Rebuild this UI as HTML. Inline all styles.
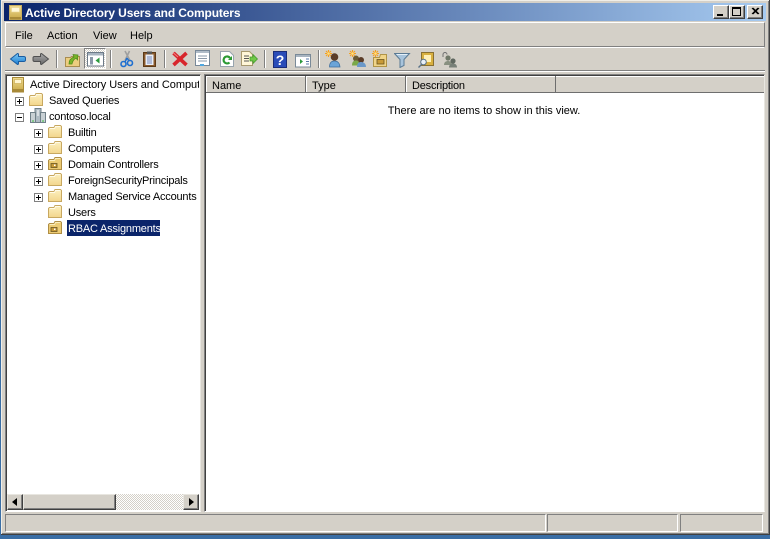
<!DOCTYPE html>
<html><head><meta charset="utf-8"><style>
html,body{margin:0;padding:0}
body{width:770px;height:539px;overflow:hidden;position:relative;background:#3a6ea5;font:11px "Liberation Sans",sans-serif;color:#000}
div,span,svg{position:absolute;box-sizing:border-box}
.t{white-space:nowrap;line-height:14px;height:14px}
.tr{letter-spacing:-.2px}
.btn{background:#d4d0c8;border:1px solid;border-color:#fff #404040 #404040 #fff;box-shadow:inset -1px -1px 0 #808080}
.sep{width:2px;height:18px;top:50px;border-left:1px solid #808080;border-right:1px solid #fff}
.hd{top:76px;height:17px;background:#d4d0c8;border-right:1px solid #6e6e6e;border-bottom:1px solid #6e6e6e;box-shadow:inset 1px 1px 0 #fff}
.st{top:514px;height:18px;border:1px solid;border-color:#808080 #fff #fff #808080}
.pm{width:9px;height:9px;border:1px solid #808080;background:#fff}
.pm:before{content:"";position:absolute;left:1px;top:3px;width:5px;height:1px;background:#000}
.pm.p:after{content:"";position:absolute;left:3px;top:1px;width:1px;height:5px;background:#000}
</style></head><body>
<svg width="0" height="0" style="position:absolute"><defs>
<linearGradient id="fg" x1="0" y1="0" x2="0" y2="1"><stop offset="0" stop-color="#fdf0c0"/><stop offset="1" stop-color="#f2d68c"/></linearGradient>
<linearGradient id="gold" x1="0" y1="0" x2="0" y2="1"><stop offset="0" stop-color="#f0dc90"/><stop offset="1" stop-color="#c8a848"/></linearGradient>
<linearGradient id="bl" x1="0" y1="0" x2="0" y2="1"><stop offset="0" stop-color="#7cc8f4"/><stop offset="1" stop-color="#1c7cd0"/></linearGradient>
<linearGradient id="gy" x1="0" y1="0" x2="0" y2="1"><stop offset="0" stop-color="#a8a8a8"/><stop offset="1" stop-color="#686868"/></linearGradient>
<g id="folder"><path d="M1.500 13.500V4.500l1-1h4.500l1-2h5.500l1 1v11z" fill="url(#fg)" stroke="#c8a860"/><path d="M2.500 4.500h5l1-2h5" fill="none" stroke="#fffbe8"/></g>
<g id="ofolder"><path d="M1.500 13.500V4.500l1-1h4.500l1-2h5.500l1 1v11z" fill="#eccb74" stroke="#b08e44"/><path d="M2.500 4.500h5l1-2h5" fill="none" stroke="#fbeebc"/><rect x="4" y="7.500" width="6" height="4" fill="#c89a38" stroke="#6a5420" stroke-width=".8"/><rect x="7" y="8.500" width="1.500" height="1.500" fill="#fff"/></g>
<g id="star"><path d="M0 3.500h7M3.500 0v7M1 1l5 5M6 1L1 6" stroke="#f4a020" stroke-width="1.100"/><circle cx="3.500" cy="3.500" r="1.300" fill="#ffe080"/></g>
</defs></svg>

<!-- window -->
<div style="left:1px;top:0;width:769px;height:535px;background:#d4d0c8;border-right:1px solid #404040;border-bottom:1px solid #404040;box-shadow:inset 1px 1px 0 #f0eee8,inset -1px -1px 0 #808080"></div>
<div style="left:4px;top:3px;width:762px;height:18px;background:linear-gradient(90deg,#0a246a,#a6caf0)"></div>
<svg style="left:9px;top:5px" width="13" height="15"><rect x=".5" y=".5" width="12" height="14" fill="url(#gold)" stroke="#c8ae60"/><rect x="2.500" y="2.500" width="8" height="4.500" fill="#fff8d8" stroke="#e8d490" stroke-width=".6"/><rect x="1" y="12" width="11" height="2.500" fill="#a88a38"/></svg>
<div class="t" style="left:25px;top:6px;color:#fff;font-weight:bold;font-size:12px;letter-spacing:-.13px">Active Directory Users and Computers</div>
<div class="btn" style="left:713px;top:5px;width:16px;height:14px"></div><div style="left:717px;top:14px;width:6px;height:2px;background:#000"></div>
<div class="btn" style="left:729px;top:5px;width:16px;height:14px"></div><div style="left:732px;top:7px;width:9px;height:9px;border:1px solid #000;border-top-width:2px"></div>
<div class="btn" style="left:747px;top:5px;width:16px;height:14px"></div>
<svg style="left:751px;top:7px" width="9" height="9"><path d="M1 1l6 6M2 1l6 6M7 1L1 7M8 1L2 7" stroke="#000" stroke-width="1"/></svg>

<!-- menu -->
<div style="left:5px;top:22px;width:760px;height:25px;border-top:1px solid #fff;border-left:1px solid #fff;border-right:1px solid #808080;border-bottom:1px solid #808080"></div>
<div style="left:6px;top:47px;width:758px;height:1px;background:#fff"></div>
<div class="t" style="left:15px;top:29px">File</div>
<div class="t" style="left:47px;top:29px">Action</div>
<div class="t" style="left:93px;top:29px">View</div>
<div class="t" style="left:130px;top:29px">Help</div>

<!-- toolbar -->
<div style="left:5px;top:70px;width:760px;height:1px;background:#808080"></div>
<div style="left:5px;top:71px;width:760px;height:1px;background:#fff"></div>
<svg style="left:9px;top:52px" width="42" height="15">
<path d="M1.500 7L8.500 1.500q1 0 1 1v2h5q2 0 2 1.500v2q0 1.500-2 1.500h-5v2q0 1-1 1z" fill="url(#bl)" stroke="#1a5ca0"/>
<path d="M39.500 7L32.500 1.500q-1 0-1 1v2h-6q-1.500 0-1.500 1.500v2q0 1.500 1.500 1.500h6v2q0 1 1 1z" fill="url(#gy)" stroke="#505050"/></svg>
<div class="sep" style="left:56px"></div>
<svg style="left:64px;top:52px" width="17" height="15"><path d="M1.500 14.500V5.500h5l1-1h8v10z" fill="#eccd80" stroke="#a88c50"/><path d="M5 12c0-4 2-6 5-7l-1-2.500 5 .5-.5 5-1.500-1.800c-2 1-3.500 3-4 5.800z" fill="#78b428" stroke="#4c8a18" stroke-width=".7"/></svg>
<div style="left:84px;top:48px;width:22px;height:21px;background:repeating-conic-gradient(#d4d0c8 0 25%,#fff 0 50%) 0 0/2px 2px;border:1px solid;border-color:#808080 #fff #fff #808080"></div>
<svg style="left:87px;top:52px" width="17" height="15"><rect x=".5" y=".5" width="16" height="13.500" fill="#fff" stroke="#6c7a88"/><rect x="1" y="1" width="15" height="2.500" fill="#a8b4c0"/><rect x="3" y="5" width="3" height="7.500" fill="#8a98a8"/><path d="M12.500 5.500l-4 3 4 3z" fill="#2c9a3c"/></svg>
<div class="sep" style="left:110px"></div>
<svg style="left:120px;top:50px" width="14" height="18"><path d="M9.500 1L5 10.500M5 1l5 9.500" stroke="#a0a0a0" stroke-width="1.600"/><circle cx="3.500" cy="14" r="2.500" fill="none" stroke="#1f6fd0" stroke-width="1.600"/><circle cx="10" cy="13" r="2.500" fill="none" stroke="#1f6fd0" stroke-width="1.600"/><path d="M5 12l2-4M9 11L7 8" stroke="#1f6fd0" stroke-width="1.400"/></svg>
<svg style="left:143px;top:51px" width="13" height="16"><rect x=".5" y="1.500" width="12" height="14" fill="#8a5a2c" stroke="#5c3a18"/><rect x="2.500" y="3.500" width="8" height="10.500" fill="#e8eef8"/><rect x="4" y=".5" width="5" height="2.500" fill="#555"/><path d="M4 6h5M4 8h5M4 10h5M4 12h5" stroke="#7a8ab8"/></svg>
<div class="sep" style="left:164px"></div>
<svg style="left:171px;top:51px" width="18" height="16"><path d="M2.500 2L15.500 14M15.500 2L2.500 14" stroke="#d8262c" stroke-width="3.600"/><path d="M2 1.500l5 4.500" stroke="#f08080"/></svg>
<svg style="left:195px;top:50px" width="15" height="17"><rect x=".5" y=".5" width="14" height="15" fill="#fff" stroke="#788898"/><rect x="1" y="1" width="13" height="2" fill="#b0bcc8"/><path d="M3 6h9M3 8.500h9M3 11h9" stroke="#8a98a8"/><rect x="5" y="14" width="4" height="2" fill="#50a8e0"/></svg>
<svg style="left:220px;top:51px" width="15" height="16"><path d="M.5.500h9l4 4v11H.5z" fill="#fff" stroke="#98a4ae"/><path d="M10 7a3.500 3.500 0 10-.5 4.500" fill="none" stroke="#2c9a34" stroke-width="2.200"/><path d="M8 9h4v-4z" fill="#2c9a34"/></svg>
<svg style="left:241px;top:51px" width="17" height="16"><path d="M.5.500h8l3 3v11H.5z" fill="#fff6d8" stroke="#a89a70"/><path d="M3 5h5M3 7.500h5M3 10h5" stroke="#555"/><path d="M9 6h3V3.500l4.500 4.500-4.500 4.500V10H9z" fill="#70c848" stroke="#3f9828" stroke-width=".7"/></svg>
<div class="sep" style="left:264px"></div>
<svg style="left:273px;top:51px" width="14" height="17"><rect x=".5" y=".5" width="13" height="16" fill="#2a4cb8" stroke="#1a2c78"/><text x="7" y="14" font-family="Liberation Sans" font-size="14" font-weight="bold" fill="#fff" text-anchor="middle">?</text></svg>
<svg style="left:295px;top:54px" width="17" height="14"><rect x=".5" y=".5" width="15" height="12.500" fill="#fff" stroke="#7a8a98"/><rect x="1" y="1" width="14" height="2" fill="#a8b4c0"/><path d="M5 5v5l3-2.500z" fill="#2c9a3c"/><path d="M11 5h3M11 7.500h3M11 10h3" stroke="#5878a8"/></svg>
<div class="sep" style="left:318px"></div>
<svg style="left:325px;top:50px" width="18" height="18"><circle cx="9.500" cy="7" r="3.800" fill="#5a3c28"/><path d="M4.500 17c0-5 2.500-6 5-6s5 1 5.500 6z" fill="#6aa4d8" stroke="#3c6c9c" stroke-width=".7"/><use href="#star"/></svg>
<svg style="left:349px;top:50px" width="18" height="18"><circle cx="7" cy="8.500" r="3" fill="#6a5a34"/><path d="M3 15.500c0-4 2-5 4-5s4 1 4 5z" fill="#7aa848"/><circle cx="12" cy="10" r="3" fill="#5a3c28"/><path d="M8 17c0-4 2-5 4-5s5 1 5 5z" fill="#6a98c8"/><use href="#star"/></svg>
<svg style="left:372px;top:50px" width="17" height="18"><path d="M1.500 16.500V7.500h6l1-3h6v12z" fill="#f0d488" stroke="#b09448"/><rect x="5" y="9.500" width="7" height="4.500" fill="#c89a38" stroke="#6a5420" stroke-width=".8"/><use href="#star"/></svg>
<svg style="left:394px;top:52px" width="17" height="16"><path d="M.5 1.500h15l-5.500 6v6l-4 2v-8z" fill="#a8c4dc" stroke="#5a7a94"/><path d="M2.500 2.500h11" stroke="#e4f0f8"/></svg>
<svg style="left:418px;top:52px" width="17" height="16"><rect x="3.500" y=".5" width="12" height="13" fill="#d8b040" stroke="#8a7030"/><rect x="6" y="3" width="7" height="7" fill="#fff0b8"/><circle cx="5.500" cy="10" r="2.800" fill="#e8f0f8" stroke="#5a7288"/><path d="M3.500 12.500L.5 15.500" stroke="#5a7288" stroke-width="1.400"/></svg>
<svg style="left:441px;top:51px" width="17" height="17"><path d="M2 6V3.500a2 2 0 014 0" fill="none" stroke="#707070"/><circle cx="7" cy="7" r="2.600" fill="#707868"/><path d="M3 14c0-3 2-4 4-4s4 1 4 4z" fill="#889080"/><circle cx="12" cy="10" r="2.600" fill="#606860"/><path d="M8 16.500c0-3 2-4 4-4s4 1 4 4z" fill="#788078"/></svg>

<!-- tree pane -->
<div style="left:5px;top:74px;width:196px;height:438px;background:#fff;border:1px solid;border-color:#808080 #e8e6e0 #fff #808080;box-shadow:inset 1px 1px 0 #404040"></div>
<svg style="left:11px;top:77px" width="14" height="16"><rect x="1.500" y=".5" width="11" height="14.500" fill="url(#gold)" stroke="#a88a38"/><rect x="3.500" y="2.500" width="7" height="4" fill="#fff6d0" stroke="#c8a850" stroke-width=".6"/><rect x="2" y="12" width="10" height="3" fill="#a88a38"/></svg>
<div class="t" style="left:30px;top:78px;width:169px;overflow:hidden;letter-spacing:-.05px">Active Directory Users and Computers</div>

<div class="pm p" style="left:15px;top:97px"></div>
<svg style="left:28px;top:92px" width="16" height="15"><use href="#folder"/></svg>
<div class="t tr" style="left:49px;top:94px">Saved Queries</div>

<div class="pm" style="left:15px;top:113px"></div>
<svg style="left:30px;top:108px" width="16" height="16"><rect x="5" y=".5" width="6" height="14" fill="#b0bcc4" stroke="#708088"/><rect x=".5" y="4.500" width="5" height="10" fill="#c8d0d4" stroke="#708088"/><rect x="10.500" y="4.500" width="5" height="10" fill="#c8d0d4" stroke="#708088"/><path d="M2 13h2M12 13h2" stroke="#40c040"/><path d="M7 3h2M7 5h2M7 7h2" stroke="#fff"/></svg>
<div class="t tr" style="left:49px;top:110px">contoso.local</div>

<div class="pm p" style="left:34px;top:129px"></div>
<svg style="left:47px;top:124px" width="16" height="15"><use href="#folder"/></svg>
<div class="t tr" style="left:68px;top:126px">Builtin</div>

<div class="pm p" style="left:34px;top:145px"></div>
<svg style="left:47px;top:140px" width="16" height="15"><use href="#folder"/></svg>
<div class="t tr" style="left:68px;top:142px">Computers</div>

<div class="pm p" style="left:34px;top:161px"></div>
<svg style="left:47px;top:156px" width="16" height="15"><use href="#ofolder"/></svg>
<div class="t tr" style="left:68px;top:158px">Domain Controllers</div>

<div class="pm p" style="left:34px;top:177px"></div>
<svg style="left:47px;top:172px" width="16" height="15"><use href="#folder"/></svg>
<div class="t tr" style="left:68px;top:174px">ForeignSecurityPrincipals</div>

<div class="pm p" style="left:34px;top:193px"></div>
<svg style="left:47px;top:188px" width="16" height="15"><use href="#folder"/></svg>
<div class="t tr" style="left:68px;top:190px">Managed Service Accounts</div>

<svg style="left:47px;top:204px" width="16" height="15"><use href="#folder"/></svg>
<div class="t tr" style="left:68px;top:206px">Users</div>

<svg style="left:47px;top:220px" width="16" height="15"><use href="#ofolder"/></svg>
<div style="left:67px;top:220px;width:93px;height:16px;background:#0a246a"></div>
<div class="t tr" style="left:68px;top:222px;color:#fff">RBAC Assignments</div>

<!-- scrollbar -->
<div style="left:7px;top:494px;width:192px;height:16px;background:repeating-conic-gradient(#d4d0c8 0 25%,#fff 0 50%) 0 0/2px 2px"></div>
<div class="btn" style="left:7px;top:494px;width:16px;height:16px;border-color:#e8e6e0 #404040 #404040 #e8e6e0"></div>
<div style="left:12px;top:498px;width:0;height:0;border:4px solid transparent;border-left:0;border-right:5px solid #000"></div>
<div class="btn" style="left:23px;top:494px;width:93px;height:16px;border-color:#e8e6e0 #404040 #404040 #e8e6e0"></div>
<div class="btn" style="left:183px;top:494px;width:16px;height:16px;border-color:#e8e6e0 #404040 #404040 #e8e6e0"></div>
<div style="left:189px;top:498px;width:0;height:0;border:4px solid transparent;border-right:0;border-left:5px solid #000"></div>

<!-- list pane -->
<div style="left:204px;top:74px;width:561px;height:438px;background:#fff;border:1px solid;border-color:#808080 #e8e6e0 #fff #808080;box-shadow:inset 1px 1px 0 #404040"></div>
<div style="left:206px;top:76px;width:558px;height:17px;background:#d4d0c8;border-bottom:1px solid #6e6e6e;box-shadow:inset 0 1px 0 #fff"></div>
<div class="hd" style="left:206px;width:100px"></div>
<div class="hd" style="left:306px;width:100px"></div>
<div class="hd" style="left:406px;width:150px"></div>
<div class="t" style="left:212px;top:79px">Name</div>
<div class="t" style="left:312px;top:79px">Type</div>
<div class="t tr" style="left:412px;top:79px">Description</div>
<div class="t" style="left:206px;top:104px;width:556px;text-align:center">There are no items to show in this view.</div>

<!-- status -->
<div class="st" style="left:5px;width:541px"></div>
<div class="st" style="left:547px;width:131px"></div>
<div class="st" style="left:680px;width:83px"></div>
</body></html>
